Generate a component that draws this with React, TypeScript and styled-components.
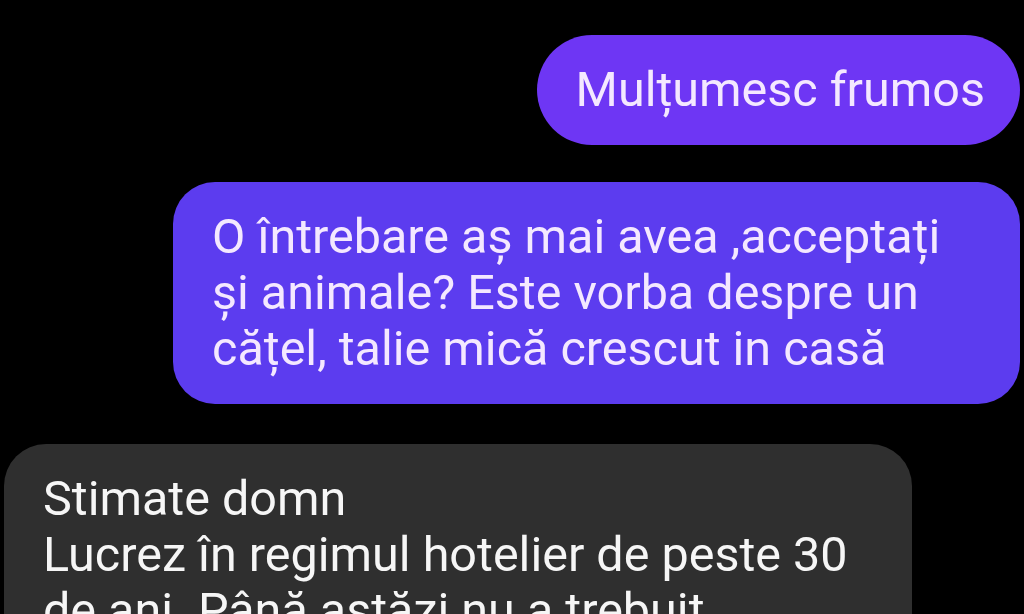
import React from 'react'
import styled, { createGlobalStyle } from 'styled-components'

const GlobalStyle = createGlobalStyle`
  html, body {
    margin: 0;
    padding: 0;
    background: #000;
    overflow: hidden;
  }
`

const Chat = styled.div`
  width: 1024px;
  height: 614px;
  overflow: hidden;
  background: #000;
  display: flex;
  flex-direction: column;
  padding-top: 35px;
  box-sizing: border-box;
  font-family: Roboto, 'Noto Sans', sans-serif;
`

const Bubble = styled.div<{ $mine?: boolean; $tone: string; $gap?: number; $width?: number; $radius?: number }>`
  flex-shrink: 0;
  box-sizing: border-box;
  width: ${({ $width }) => ($width ? `${$width}px` : 'auto')};
  margin-top: ${({ $gap }) => $gap ?? 0}px;
  align-self: ${({ $mine }) => ($mine ? 'flex-end' : 'flex-start')};
  margin-right: ${({ $mine }) => ($mine ? '4px' : '0')};
  margin-left: ${({ $mine }) => ($mine ? '0' : '4px')};
  padding: 27px 35px 27px 39px;
  border-radius: ${({ $radius }) => $radius ?? 42}px;
  background: ${({ $tone }) => $tone};
  color: ${({ $mine }) => ($mine ? '#f4e8ff' : '#f6f6f6')};
  font-size: 48.5px;
  line-height: 56px;
`

const Line = styled.div`
  white-space: nowrap;
`

const App = () => (
  <>
    <GlobalStyle />
    <Chat>
      <Bubble $mine $tone="#6e36f4" $radius={55}>
        <Line>Mulțumesc frumos</Line>
      </Bubble>
      <Bubble $mine $tone="#5c3cef" $gap={37} $width={847}>
        <Line>O întrebare aș mai avea ,acceptați</Line>
        <Line>și animale? Este vorba despre un</Line>
        <Line>cățel, talie mică crescut in casă</Line>
      </Bubble>
      <Bubble $tone="#2f2f2f" $gap={40} $width={908}>
        <Line>Stimate domn</Line>
        <Line>Lucrez în regimul hotelier de peste 30</Line>
        <Line>de ani. Până astăzi nu a trebuit</Line>
      </Bubble>
    </Chat>
  </>
)

export default App
